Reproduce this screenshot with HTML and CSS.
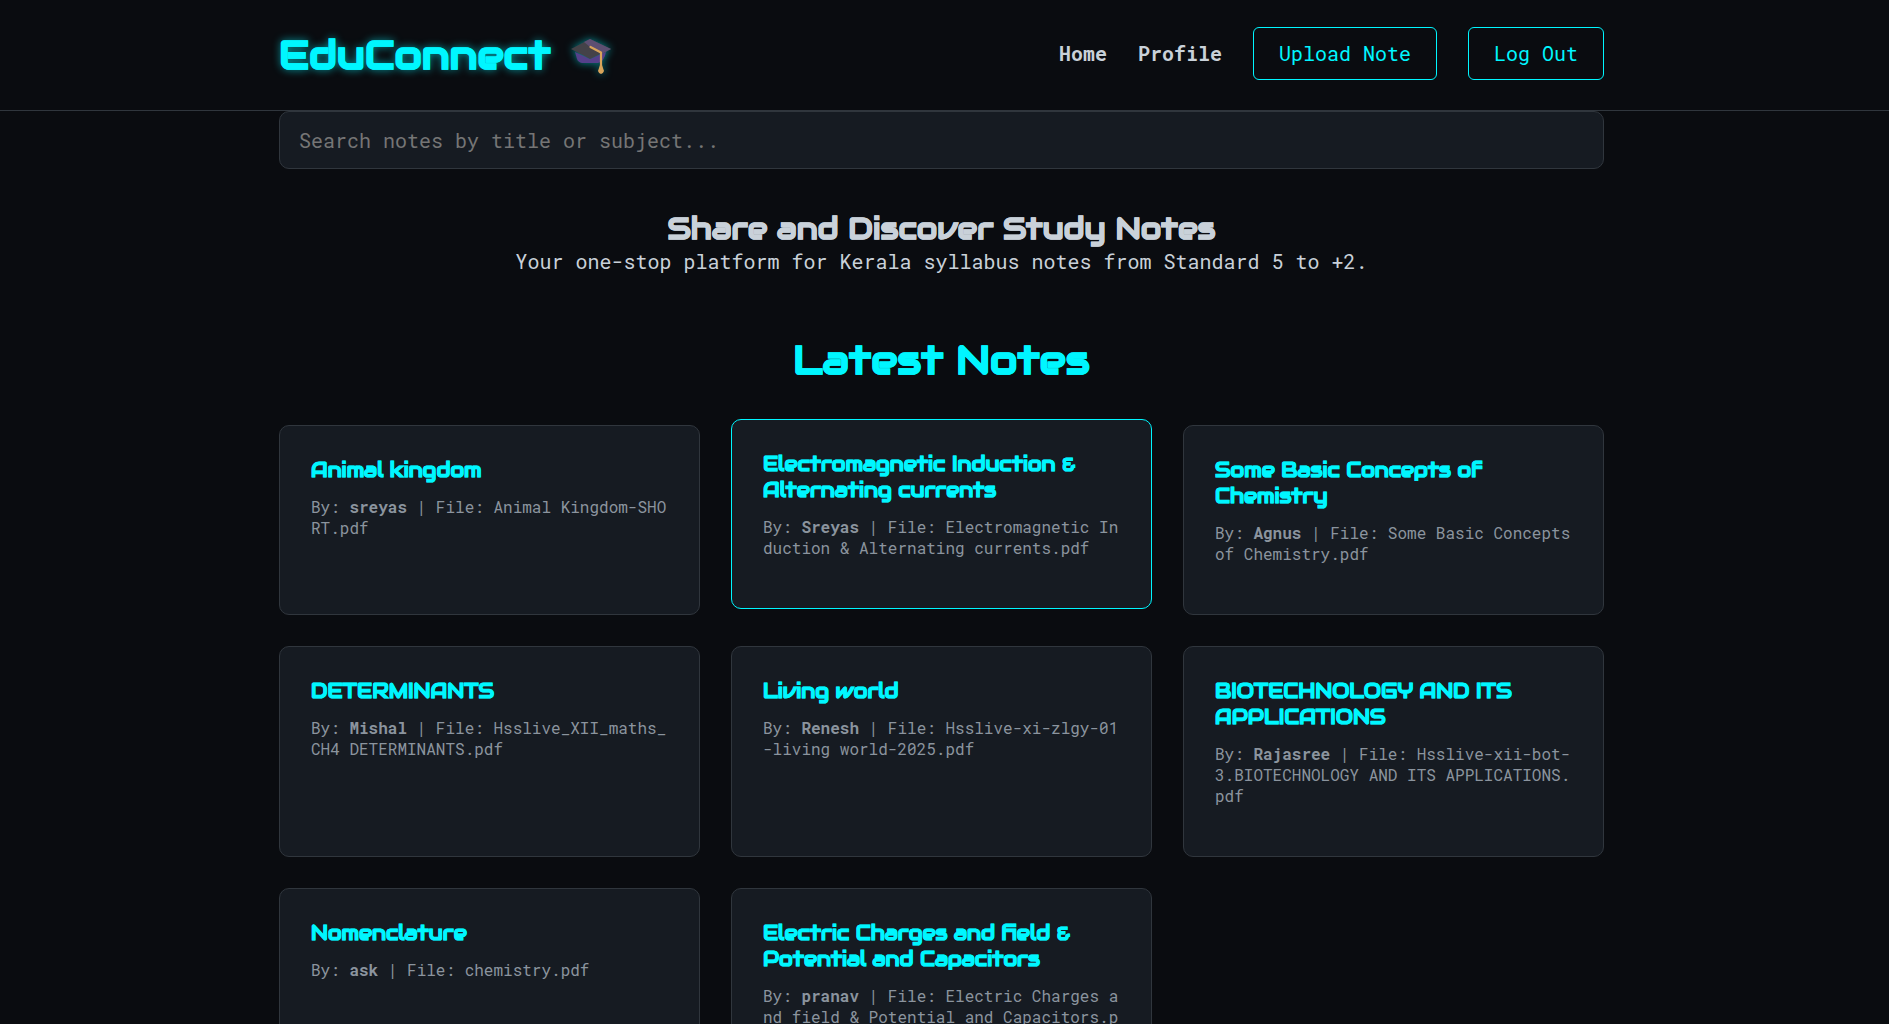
FILE: index.html
```html
<!DOCTYPE html>
<html lang="en">
  <head>
    <meta charset="UTF-8" />
    <meta name="viewport" content="width=device-width, initial-scale=1.0" />
    <title>EduConnect</title>
    <link rel="stylesheet" href="styles.css">
  </head>
  <body>
    <header class="header">
      <div class="container navbar">
        <a class="logo" href="#">
          <span class="logo-text">EduConnect</span>
          <svg class="logo-cap" viewBox="0 0 42 38" aria-hidden="true">
            <path d="M5 14 L7 21 Q8 24 12 25 H28 Q34 24 36 14 L20 21 Z" fill="#55408a" />
            <path d="M1 11 L20 1 L41 11 L20 21 Z" fill="#444248" />
            <path d="M20 1 L41 11 L32 16 L20 9 L14 4 Z" fill="#5d4f72" />
            <path d="M20.500 9 L31 14.500 V30" fill="none" stroke="#d9a45a" stroke-width="2.200" stroke-linejoin="round" stroke-linecap="round" />
            <path d="M30 27 h2 l2 6 q-1 3 -3 3 t-3 -3 z" fill="#d9a45a" />
          </svg>
        </a>
        <nav class="nav-links">
          <a class="nav-link" href="#">Home</a>
          <a class="nav-link" href="#">Profile</a>
          <button class="btn">Upload Note</button>
          <button class="btn">Log Out</button>
        </nav>
      </div>
    </header>

    <main class="container">
      <input class="search" type="text" placeholder="Search notes by title or subject..." />

      <section class="hero">
        <h2>Share and Discover Study Notes</h2>
        <p>Your one-stop platform for Kerala syllabus notes from Standard 5 to +2.</p>
      </section>

      <h2 class="section-title">Latest Notes</h2>

      <div class="notes-grid">
        <div class="note-card">
          <h3>Animal kingdom</h3>
          <p>By: <strong>sreyas</strong> | File: Animal Kingdom-SHORT.pdf</p>
        </div>
        <div class="note-card active">
          <h3>Electromagnetic Induction &amp; Alternating currents</h3>
          <p>By: <strong>Sreyas</strong> | File: Electromagnetic Induction &amp; Alternating currents.pdf</p>
        </div>
        <div class="note-card">
          <h3>Some Basic Concepts of Chemistry</h3>
          <p>By: <strong>Agnus</strong> | File: Some Basic Concepts of Chemistry.pdf</p>
        </div>
        <div class="note-card">
          <h3>DETERMINANTS</h3>
          <p>By: <strong>Mishal</strong> | File: Hsslive_XII_maths_CH4 DETERMINANTS.pdf</p>
        </div>
        <div class="note-card">
          <h3>Living world</h3>
          <p>By: <strong>Renesh</strong> | File: Hsslive-xi-zlgy-01-living world-2025.pdf</p>
        </div>
        <div class="note-card">
          <h3>BIOTECHNOLOGY AND ITS APPLICATIONS</h3>
          <p>By: <strong>Rajasree</strong> | File: Hsslive-xii-bot-<br>3.BIOTECHNOLOGY AND ITS APPLICATIONS.pdf</p>
        </div>
        <div class="note-card">
          <h3>Nomenclature</h3>
          <p>By: <strong>ask</strong> | File: chemistry.pdf</p>
        </div>
        <div class="note-card">
          <h3>Electric Charges and field &amp; Potential and Capacitors</h3>
          <p>By: <strong>pranav</strong> | File: Electric Charges and field &amp; Potential and Capacitors.pdf</p>
        </div>
      </div>
    </main>
  </body>
</html>
```
FILE: styles.css
```css
* {
  box-sizing: border-box;
  margin: 0;
  padding: 0;
}

body {
  height: 1024px;
  padding-right: 6px;
  overflow: hidden;
  background: #0a0c10;
  color: #c9d1d9;
  font-family: "Roboto Mono", "DejaVu Sans Mono", monospace;
  font-size: 20px;
}

.container {
  width: 1325px;
  margin: 0 auto;
}

.header {
  height: 111px;
  margin-right: -6px;
  padding-right: 6px;
  border-bottom: 1px solid #30363d;
}

.navbar {
  display: flex;
  align-items: center;
  justify-content: space-between;
  height: 106px;
}

.logo,
h2,
h3 {
  font-family: Audiowide, Orbitron, "DejaVu Sans", sans-serif;
  font-weight: 700;
  -webkit-text-stroke: 0.4px currentColor;
}

.logo {
  display: flex;
  align-items: center;
  gap: 19px;
  padding-top: 2px;
  color: #00f6ff;
  font-size: 40px;
  text-decoration: none;
}

.logo-text {
  text-shadow: 0 0 8px rgba(0, 246, 255, 0.6);
}

.logo-cap {
  width: 42px;
  height: 38px;
  margin-top: 6px;
  filter: drop-shadow(0 0 4px rgba(0, 246, 255, 0.55));
}

.nav-links {
  display: flex;
  align-items: center;
  gap: 31px;
}

.nav-link {
  color: #c9d1d9;
  font-weight: 700;
  text-decoration: none;
}

.btn {
  height: 53px;
  padding: 0 25px;
  background: transparent;
  border: 1px solid #00f6ff;
  border-radius: 6px;
  color: #00f6ff;
  font: inherit;
  cursor: pointer;
}

.search {
  display: block;
  width: 100%;
  height: 58px;
  padding: 0 19px;
  background: #161b22;
  border: 1px solid #30363d;
  border-radius: 10px;
  color: #c9d1d9;
  font: inherit;
}

.search::placeholder {
  color: #757575;
}

.hero {
  padding-top: 40px;
  text-align: center;
}

.hero h2 {
  font-size: 30px;
  line-height: 39px;
}

.hero p {
  line-height: 26px;
}

.section-title {
  margin: 60px 0 39px;
  color: #00f6ff;
  font-size: 40px;
  line-height: 52px;
  text-align: center;
}

.notes-grid {
  display: grid;
  grid-template-columns: repeat(3, 421px);
  grid-template-rows: 190px 211px 232px;
  gap: 31px;
}

.note-card {
  padding: 31px;
  background: #161b22;
  border: 1px solid #30363d;
  border-radius: 10px;
}

.note-card.active {
  border-color: #00f6ff;
  transform: translateY(-6px);
}

.note-card h3 {
  margin-bottom: 13px;
  color: #00f6ff;
  font-size: 20px;
  line-height: 26px;
}

.note-card p {
  color: #8b949e;
  font-size: 16px;
  line-height: 21px;
  word-break: break-all;
}
```
